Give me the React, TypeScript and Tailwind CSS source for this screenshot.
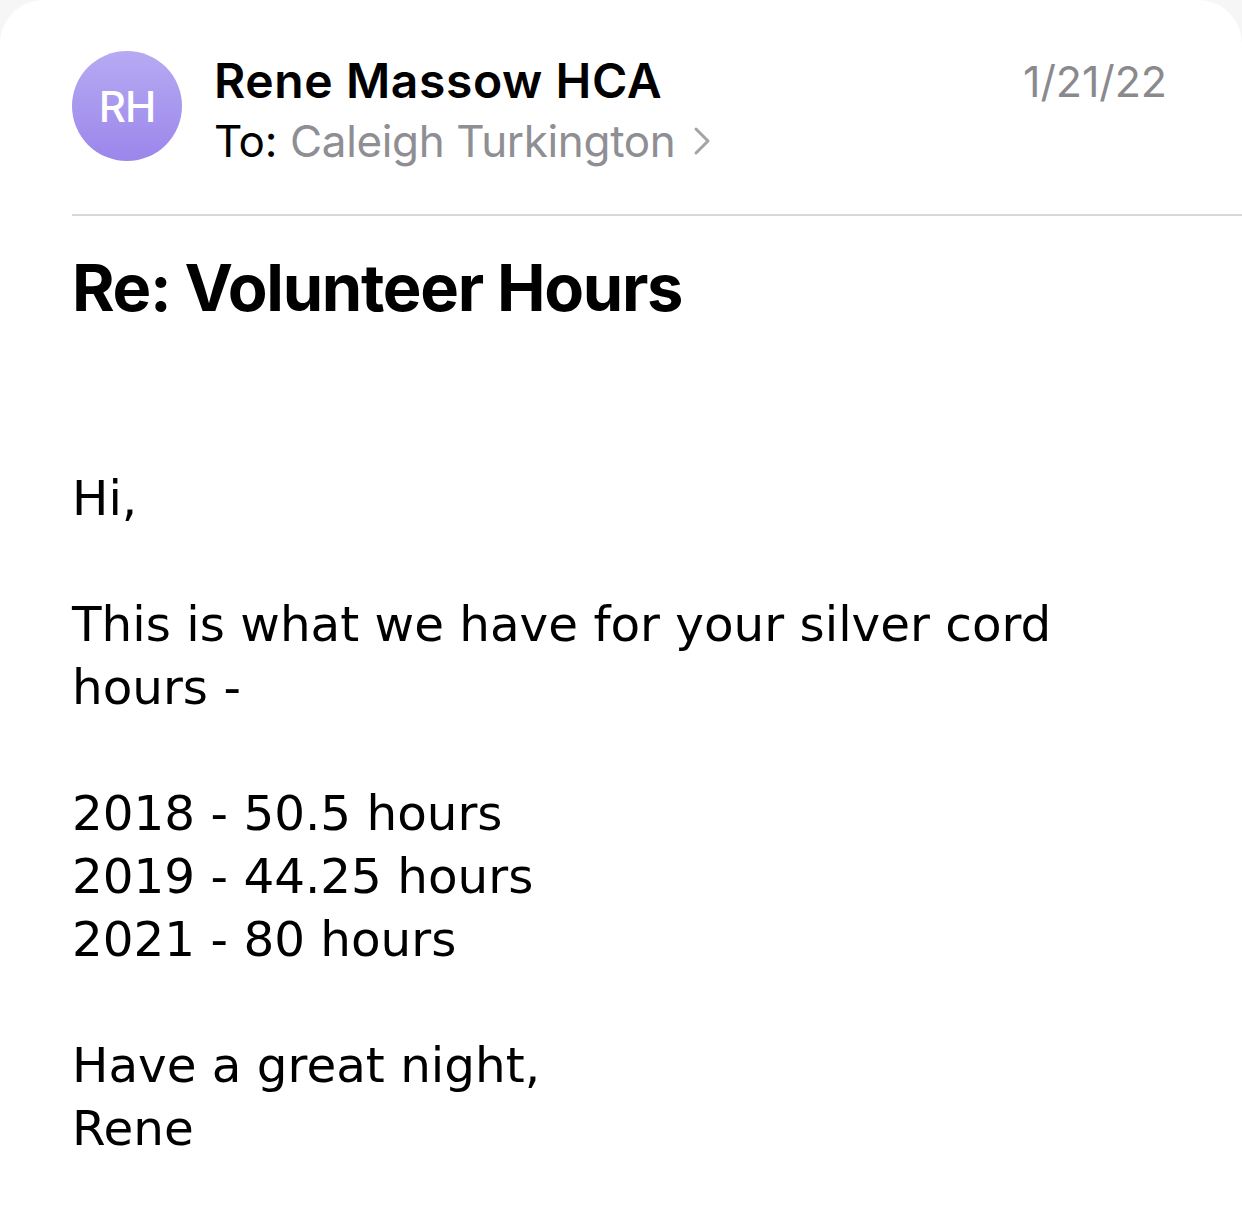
import React from "react";

export default function App() {
  return (
    <div className="min-h-[1205px] w-[1242px] bg-[#f6f6f6]">
      <div className="min-h-[1205px] rounded-t-[44px] bg-white pt-[51px]">
        <div className="flex items-start pl-[72px] pr-[75px]">
          <div className="flex h-[110px] w-[110px] shrink-0 items-center justify-center rounded-full bg-gradient-to-b from-[#b7aaf2] to-[#9b86eb]">
            <span className="text-[42px] font-medium tracking-tight text-white [font-family:Inter,'Noto_Sans',sans-serif]">
              RH
            </span>
          </div>
          <div className="ml-[32px] flex flex-1 flex-col [font-family:Inter,'Noto_Sans',sans-serif]">
            <div className="text-[48px] font-semibold leading-[60px] tracking-[0.6px] text-black">
              Rene Massow HCA
            </div>
            <div className="flex items-center text-[44px] leading-[60px] tracking-[-0.35px]">
              <span className="text-black">To:</span>
              <span className="ml-[13px] text-[#8e8e93]">Caleigh Turkington</span>
              <svg
                className="ml-[18px]"
                width="18"
                height="30"
                viewBox="0 0 18 30"
                fill="none"
              >
                <path
                  d="M3 3 L15 15 L3 27"
                  stroke="#a3a3a8"
                  strokeWidth="3"
                  strokeLinecap="round"
                  strokeLinejoin="round"
                />
              </svg>
            </div>
          </div>
          <div className="text-[43px] leading-[60px] tracking-[-0.1px] text-[#8a8a8e] [font-family:Inter,'Noto_Sans',sans-serif]">
            1/21/22
          </div>
        </div>
        <div className="ml-[72px] mt-[43px] h-[2px] bg-[#d8d8dc]" />
        <div className="pl-[72px] pr-[40px]">
          <h1 className="mt-[34px] text-[65px] font-bold leading-[76px] tracking-[-1.3px] text-black [font-family:Inter,'Noto_Sans',sans-serif]">
            Re: Volunteer Hours
          </h1>
          <div className="mt-[141px] text-[48.4px] leading-[63px] text-black [font-family:'DejaVu_Sans',Verdana,sans-serif]">
            <div>Hi,</div>
            <div>&nbsp;</div>
            <div>This is what we have for your silver cord</div>
            <div>hours -</div>
            <div>&nbsp;</div>
            <div>2018 - 50.5 hours</div>
            <div>2019 - 44.25 hours</div>
            <div>2021 - 80 hours</div>
            <div>&nbsp;</div>
            <div>Have a great night,</div>
            <div>Rene</div>
          </div>
        </div>
      </div>
    </div>
  );
}
